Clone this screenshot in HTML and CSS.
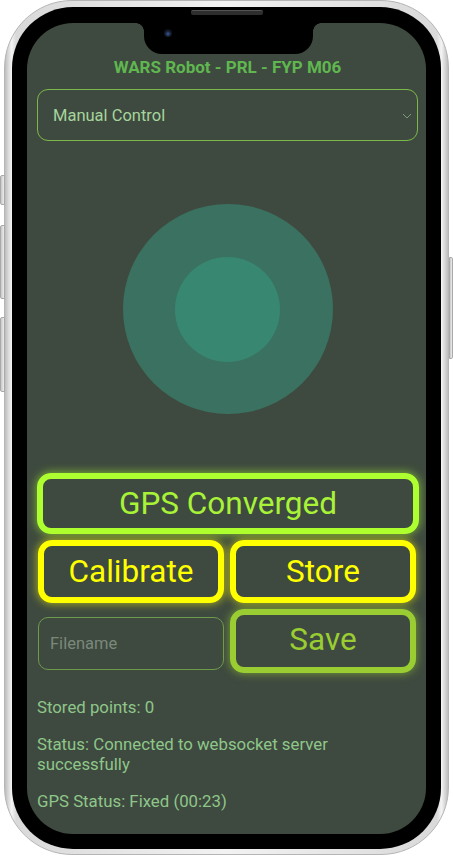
FILE: index.html
```html
<!DOCTYPE html>
<html>
<head>
<meta charset="utf-8">
<link rel="stylesheet" href="styles.css">
</head>
<body>
<div class="phone">
  <span class="side mute"></span>
  <span class="side vol-up"></span>
  <span class="side vol-down"></span>
  <span class="side power"></span>
  <div class="bezel">
    <span class="speaker"></span>
    <div class="screen">
      <div class="notch"><span class="cam"></span></div>
      <h1 class="title">WARS Robot - PRL - FYP M06</h1>
      <div class="select">
        <span>Manual Control</span>
        <svg class="chev" width="10" height="6" viewBox="0 0 10 6"><path d="M1 1 L5 5 L9 1" fill="none" stroke="#7f9a7a" stroke-width="1"/></svg>
      </div>
      <div class="joy"><div class="joy-inner"></div></div>
      <button class="btn lime wide">GPS Converged</button>
      <div class="row">
        <button class="btn yellow">Calibrate</button>
        <button class="btn yellow">Store</button>
      </div>
      <div class="row">
        <input class="file" type="text" placeholder="Filename">
        <button class="btn yg">Save</button>
      </div>
      <p class="info first">Stored points: 0</p>
      <p class="info">Status: Connected to websocket server successfully</p>
      <p class="info">GPS Status: Fixed (00:23)</p>
    </div>
  </div>
</div>
</body>
</html>
```

FILE: styles.css
```css
html, body {
  margin: 0;
  padding: 0;
  background: #ffffff;
}
body {
  width: 453px;
  height: 858px;
  overflow: hidden;
  font-family: Roboto, "Liberation Sans", sans-serif;
}
.phone {
  position: relative;
  box-sizing: border-box;
  margin-left: 4px;
  width: 445px;
  height: 855px;
  border-radius: 68px;
  padding: 6px 7px 5px 7px;
  background: linear-gradient(90deg, #bdbdbd 0%, #f4f4f4 1.5%, #d9d9d9 2.5%, #f2f2f2 50%, #d9d9d9 97.5%, #f4f4f4 98.5%, #bdbdbd 100%);
  border: 1px solid #b5b5b5;
}
.side {
  position: absolute;
  width: 5px;
  background: linear-gradient(90deg, #c8c8c8, #ededed);
  border: 1px solid #a9a9a9;
  box-sizing: border-box;
}
.mute { left: -5px; top: 174px; height: 30px; border-radius: 2px 0 0 2px; }
.vol-up { left: -5px; top: 224px; height: 74px; border-radius: 2px 0 0 2px; }
.vol-down { left: -5px; top: 316px; height: 75px; border-radius: 2px 0 0 2px; }
.power { right: -5px; top: 256px; height: 102px; border-radius: 0 2px 2px 0; width: 4px; }
.bezel {
  position: relative;
  box-sizing: border-box;
  height: 100%;
  background: #000;
  border-radius: 61px;
  padding: 16px 15px 15px 15px;
}
.speaker {
  position: absolute;
  left: 179px;
  top: 3px;
  width: 72px;
  height: 4px;
  border-radius: 2px;
  background: #2e2e2e;
  border-top: 1px solid #555;
}
.screen {
  position: relative;
  box-sizing: border-box;
  height: 100%;
  background: #3e4a3f;
  border-radius: 46px;
  padding: 34px 8px 0 10px;
  overflow: hidden;
}
.notch {
  position: absolute;
  left: 117px;
  top: 0;
  width: 169px;
  height: 31px;
  background: #000;
  border-radius: 0 0 18px 18px;
}
.notch::before, .notch::after {
  content: "";
  position: absolute;
  top: 0;
  width: 8px;
  height: 8px;
}
.notch::before {
  left: -8px;
  background: radial-gradient(circle at 0 100%, transparent 7.5px, #000 8px);
}
.notch::after {
  right: -8px;
  background: radial-gradient(circle at 100% 100%, transparent 7.5px, #000 8px);
}
.cam {
  position: absolute;
  left: 20px;
  top: 6px;
  width: 8px;
  height: 8px;
  border-radius: 50%;
  background: radial-gradient(circle at 50% 60%, #3c5fa8 0, #1d2a45 2px, #0c0f18 4px);
}
.title {
  margin: 0;
  text-align: center;
  font-size: 17px;
  line-height: 20px;
  font-weight: 700;
  color: #60b750;
}
.select {
  margin-top: 12px;
  height: 52px;
  box-sizing: border-box;
  border: 1px solid #7db84a;
  border-radius: 11px;
  display: flex;
  align-items: center;
  justify-content: space-between;
  padding: 0 5px 0 15px;
  font-size: 16.5px;
  color: #a6d49c;
}
.chev { margin-top: 1px; }
.joy {
  margin: 63px auto 0;
  width: 210px;
  height: 210px;
  border-radius: 50%;
  background: #3b7160;
  display: flex;
  align-items: center;
  justify-content: center;
}
.joy-inner {
  width: 105px;
  height: 105px;
  border-radius: 50%;
  background: #388871;
}
.btn {
  box-sizing: border-box;
  background: transparent;
  border: 6px solid;
  border-radius: 14px;
  font-family: Roboto, "Liberation Sans", sans-serif;
  font-size: 31.5px;
  padding: 0;
  margin: 0;
}
.wide {
  display: block;
  width: 382px;
  height: 61px;
  margin-top: 59px;
}
.lime { color: #a8f238; border-color: #adff2f; box-shadow: 0 0 8px 1px rgba(173, 255, 47, 0.55); }
.yellow { color: #ffff00; border-color: #ffff00; box-shadow: 0 0 8px 1px rgba(255, 255, 0, 0.55); }
.yg { color: #9acd32; border-color: #9acd32; box-shadow: 0 0 8px 1px rgba(154, 205, 50, 0.55); padding-bottom: 4px; }
.row {
  display: grid;
  grid-template-columns: 1fr 1fr;
  gap: 6px;
  margin-top: 6px;
  padding: 0 2px 0 1px;
  align-items: center;
}
.row .btn { height: 63px; }
.row:last-of-type .btn { height: 64px; }
.file {
  box-sizing: border-box;
  height: 53px;
  width: 100%;
  margin-top: 4px;
  background: transparent;
  border: 1px solid #6e9a4c;
  border-radius: 10px;
  padding: 0 11px;
  font-family: Roboto, "Liberation Sans", sans-serif;
  font-size: 16.5px;
  color: #a6d49c;
  outline: none;
}
.file::placeholder { color: #7b887b; }
.info {
  margin: 17px 0 0;
  font-size: 16.8px;
  line-height: 20px;
  color: #8fc68a;
  padding-right: 50px;
}
.info.first { margin-top: 24px; }
```
